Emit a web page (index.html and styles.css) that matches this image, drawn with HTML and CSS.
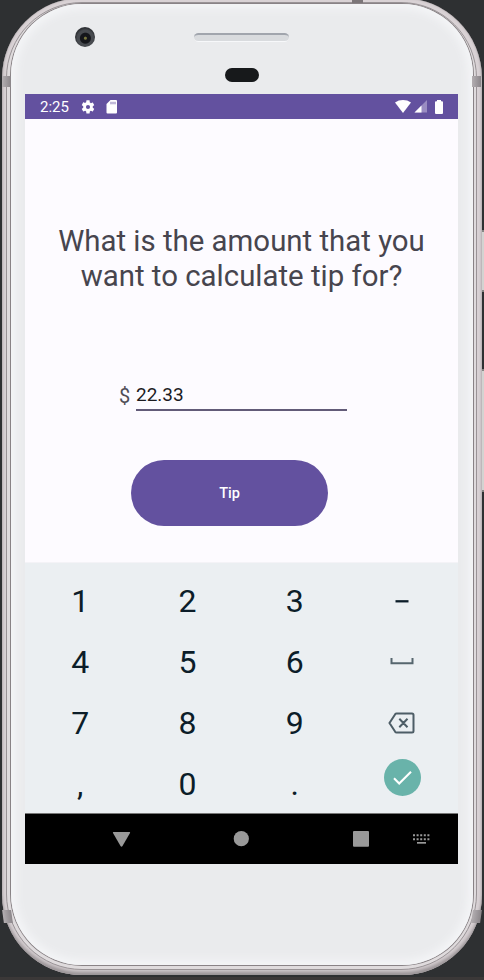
FILE: index.html
```html
<!DOCTYPE html>
<html lang="en">
<head>
<meta charset="utf-8">
<title>Tip calculator</title>
<link rel="stylesheet" href="styles.css">
</head>
<body>
<div class="phone">
  <span class="band band-left band-high"></span>
  <span class="band band-right band-high"></span>
  <span class="band band-left band-low"></span>
  <span class="band band-right band-low"></span>
  <span class="band-top"></span>
  <span class="side-button power"></span>
  <span class="side-button volume"></span>
  <div class="rim">
    <div class="face">
      <span class="camera"></span>
      <span class="speaker"></span>
      <span class="sensor"></span>
      <div class="screen">
        <header class="status">
          <span class="clock">2:25</span>
          <svg class="gear" width="16" height="16" viewBox="0 0 24 24"><path fill="#fff" d="M19.14 12.94c.04-.3.06-.61.06-.94s-.02-.64-.07-.94l2.03-1.58c.18-.14.23-.41.12-.61l-1.92-3.32c-.12-.22-.37-.29-.59-.22l-2.39.96c-.5-.38-1.03-.7-1.62-.94l-.36-2.54A.48.48 0 0 0 13.92 2h-3.84c-.24 0-.43.17-.47.41l-.36 2.54c-.59.24-1.13.57-1.62.94l-2.39-.96c-.22-.08-.47 0-.59.22L2.74 8.87c-.12.21-.08.47.12.61l2.03 1.58c-.05.3-.09.63-.09.94s.02.64.07.94l-2.03 1.58c-.18.14-.23.41-.12.61l1.92 3.32c.12.22.37.29.59.22l2.39-.96c.5.38 1.03.7 1.62.94l.36 2.54c.05.24.24.41.48.41h3.84c.24 0 .44-.17.47-.41l.36-2.54c.59-.24 1.13-.56 1.62-.94l2.39.96c.22.08.47 0 .59-.22l1.92-3.32c.12-.22.07-.47-.12-.61zM12 15.1a3.1 3.1 0 1 1 0-6.2 3.1 3.1 0 0 1 0 6.2z"/></svg>
          <svg class="card" width="12" height="14" viewBox="0 0 12 14"><path fill="#fff" d="M4.500 0H10q1 0 1 1v11.500q0 1-1 1H1.500q-1 0-1-1V4z"/><path stroke="#63519f" stroke-width=".8" d="M5 1.800v2.500M7 1.800v2.500M9 1.800v2.500"/></svg>
          <svg class="wifi" width="16" height="13" viewBox="0 0 16 13"><path fill="#fff" d="M0 2.400Q3.500 0 8 0t8 2.400L8 13z"/></svg>
          <svg class="signal" width="13" height="13" viewBox="0 0 13 13"><path fill="#9a8cc2" d="M13 0v12.500H.5z"/><path fill="#fff" d="M7.500 5.500v7H.5z"/></svg>
          <svg class="battery" width="8" height="14" viewBox="0 0 8 14"><path fill="#fff" d="M2 0h4v1.200h1q1 0 1 1V13q0 1-1 1H1q-1 0-1-1V2.200q0-1 1-1h1z"/></svg>
        </header>
        <main class="content">
          <h1 class="question">What is the amount that you<br>want to calculate tip for?</h1>
          <div class="amount">
            <span class="currency">$</span>
            <span class="field">22.33</span>
          </div>
          <button class="tip">Tip</button>
        </main>
        <section class="keypad">
          <span>1</span><span>2</span><span>3</span>
          <span class="symbol"><svg width="28" height="28" viewBox="0 0 28 28"><path d="M7.500 14.300h13" stroke="#0c1d29" stroke-width="2.300"/></svg></span>
          <span>4</span><span>5</span><span>6</span>
          <span class="symbol"><svg width="28" height="28" viewBox="0 0 28 28"><path d="M3.500 10v5.300h21V10" fill="none" stroke="#56666e" stroke-width="2"/></svg></span>
          <span>7</span><span>8</span><span>9</span>
          <span class="symbol"><svg width="28" height="28" viewBox="0 0 28 28"><path d="M8.500 4.500H24q1.500 0 1.500 1.500v16q0 1.500-1.500 1.500H8.500q-.8 0-1.300-.7L1.500 14l5.700-8.800q.5-.7 1.300-.7zM11.300 9.800l8.200 8.400M19.500 9.800l-8.200 8.400" fill="none" stroke="#4d5d66" stroke-width="2"/></svg></span>
          <span>,</span><span>0</span><span>.</span>
          <span class="done"><svg width="37" height="37" viewBox="0 0 37 37"><circle cx="18.500" cy="18.500" r="18.500" fill="#69b3aa"/><path d="M10 19.300l5.200 5.200L27 12.700" fill="none" stroke="#fff" stroke-width="2.100"/></svg></span>
        </section>
        <nav class="navbar">
          <svg width="433" height="50" viewBox="0 0 433 50" fill="#999"><path d="M88.500 18h16q1 0 .5 1l-7.500 13q-1 1.500-2 0L88 19q-.5-1 .5-1z"/><circle cx="216.300" cy="24.700" r="7.600"/><rect x="328" y="17" width="16" height="15.700" rx="1"/><path d="M388 21.200h17M388 25.200h17" stroke="#999" stroke-width="2" stroke-dasharray="2 1.600"/><path d="M392 28h9v1.700h-9z"/></svg>
        </nav>
      </div>
    </div>
  </div>
</div>
</body>
</html>
```
FILE: styles.css
```css
* { box-sizing: border-box; }
html { background: #2e3032; }
body {
  margin: 0;
  width: 484px;
  height: 980px;
  overflow: hidden;
  font-family: Roboto, "Liberation Sans", sans-serif;
  border-bottom: 3px solid #3b3838;
}
.phone {
  position: relative;
  width: 480px;
  height: 977px;
  margin: -2px 0 0 2px;
  padding: 4px 5px 5px 4px;
  border-radius: 80px;
  background: #d9d2d5;
  box-shadow: inset 0 0 2px #a8a1a4, inset 0 -4px 4px -1px #918b8e;
}
.rim {
  height: 100%;
  padding: 1px 4px 4px 5px;
  border: 1px solid #999396;
  border-radius: 76px;
  background: #dfdbdd;
}
.face {
  position: relative;
  height: 100%;
  margin: 0 -1px;
  padding: 90px 13px 0 14px;
  border-radius: 71px;
  background: #eaebed;
  box-shadow: 0 0 0 1px #898386, inset 0 0 9px 5px #f4f5f7;
}
.band {
  position: absolute;
  z-index: 1;
  width: 9px;
  height: 11px;
  background: linear-gradient(90deg, #b3aeb1, #8b868a);
}
.band-left { left: 0; }
.band-right { right: 1px; }
.band-high { top: 78px; }
.band-low { top: 912px; height: 13px; }
.band-low.band-left { left: 1px; transform: skewX(8deg); }
.band-low.band-right { transform: skewX(-8deg); }
.band-top {
  position: absolute;
  z-index: 1;
  left: 350px;
  top: 2px;
  width: 11px;
  height: 3px;
  background: #7c7679;
}
.side-button {
  position: absolute;
  right: -3px;
  width: 3px;
  background: #d3d3d1;
  border: solid #858583;
  border-width: 2px 0;
}
.power { top: 232px; height: 62px; }
.volume { top: 371px; height: 123px; }
.camera {
  position: absolute;
  left: 64px;
  top: 23px;
  width: 20px;
  height: 20px;
  border-radius: 50%;
  background: radial-gradient(circle at 52% 56%, #77743c 0 1px, #15161b 2px 5px, #484b50 6px 8px, #303236 10px);
}
.speaker {
  position: absolute;
  left: 183px;
  top: 29px;
  width: 95px;
  height: 9px;
  border-radius: 5px;
  border-top: 2px solid #a1a5ad;
  border-bottom: 1px solid #f7f8fa;
  background: #d9dbde;
}
.sensor {
  position: absolute;
  left: 214px;
  top: 64px;
  width: 34px;
  height: 14px;
  border-radius: 7px;
  background: #17191b;
}
.screen {
  width: 433px;
  height: 770px;
  display: flex;
  flex-direction: column;
  background: #fdfbff;
}
.status {
  height: 25px;
  padding: 0 15px;
  display: flex;
  align-items: center;
  background: #63519f;
  color: #fff;
}
.clock { width: 40px; font-size: 15px; line-height: 25px; padding-top: 2px; }
.card { margin-left: 10px; }
.wifi { margin-left: auto; }
.signal { margin-left: 3px; }
.battery { margin-left: 8px; }
.content {
  height: 443px;
  display: flex;
  flex-direction: column;
  align-items: center;
}
.question {
  margin: 105px 0 0;
  font-size: 29.400px;
  line-height: 34.500px;
  font-weight: 400;
  text-align: center;
  white-space: nowrap;
  color: #47454e;
}
.amount {
  display: flex;
  align-self: flex-start;
  margin: 87px 0 0 94px;
  line-height: 30px;
}
.currency { width: 17px; padding-top: 1px; font-size: 20px; color: #504e56; }
.field {
  width: 211px;
  height: 31px;
  font-size: 19px;
  color: #1c1b1f;
  border-bottom: 2px solid #625b78;
}
.tip {
  align-self: flex-start;
  width: 197px;
  height: 66px;
  margin: 49px 0 0 106px;
  padding: 0;
  border: 0;
  border-radius: 33px;
  background: #63519f;
  color: #fff;
  font: 500 14.500px Roboto, sans-serif;
}
.keypad {
  height: 252px;
  padding: 8px 1px 0 1.500px;
  display: grid;
  grid-template-columns: repeat(4, 107.300px);
  grid-auto-rows: 61px;
  background: #ebeff2;
  border-top: 1px solid #f4f3f7;
  border-bottom: 1px solid #777;
  font-size: 32px;
  line-height: 61px;
  color: #0c1d29;
}
.keypad span { display: flex; align-items: center; justify-content: center; }
.keypad .symbol { padding-bottom: 2px; }
.keypad .done { padding-bottom: 15px; }
.navbar { height: 50px; background: #000; }
.navbar svg { display: block; }
```
